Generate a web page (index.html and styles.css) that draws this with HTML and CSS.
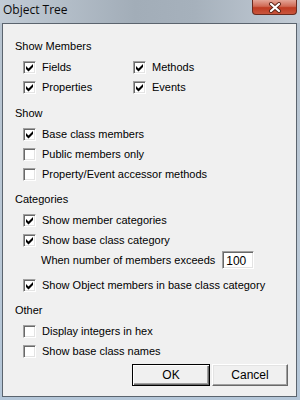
FILE: index.html
```html
<!DOCTYPE html>
<html lang="en">
<head>
  <meta charset="UTF-8" />
  <title>Object Tree</title>
  <link rel="stylesheet" href="styles.css">
</head>
<body>
  <div class="window">
    <div class="titlebar">
      <span class="title">Object Tree</span>
      <span class="close">
        <svg width="14" height="11" viewBox="0 0 14 11">
          <path d="M3 2 L11 9 M11 2 L3 9" stroke="#5a2418" stroke-width="4" stroke-linecap="round" />
          <path d="M3 2 L11 9 M11 2 L3 9" stroke="#fff" stroke-width="2.2" stroke-linecap="round" />
        </svg>
      </span>
    </div>
    <div class="client">
      <div class="group">
        <div class="group-label">Show Members</div>
        <div class="members">
          <div class="check"><span class="box"><svg viewBox="0 0 11 11"><path d="M2 4 L4.5 6.5 L9 2 L9 5 L4.5 9.5 L2 7 Z" /></svg></span>Fields</div>
          <div class="check"><span class="box"><svg viewBox="0 0 11 11"><path d="M2 4 L4.5 6.5 L9 2 L9 5 L4.5 9.5 L2 7 Z" /></svg></span>Methods</div>
          <div class="check"><span class="box"><svg viewBox="0 0 11 11"><path d="M2 4 L4.5 6.5 L9 2 L9 5 L4.5 9.5 L2 7 Z" /></svg></span>Properties</div>
          <div class="check"><span class="box"><svg viewBox="0 0 11 11"><path d="M2 4 L4.5 6.5 L9 2 L9 5 L4.5 9.5 L2 7 Z" /></svg></span>Events</div>
        </div>
      </div>

      <div class="group">
        <div class="group-label">Show</div>
        <div class="check"><span class="box"><svg viewBox="0 0 11 11"><path d="M2 4 L4.5 6.5 L9 2 L9 5 L4.5 9.5 L2 7 Z" /></svg></span>Base class members</div>
        <div class="check"><span class="box"></span>Public members only</div>
        <div class="check"><span class="box"></span>Property/Event accessor methods</div>
      </div>

      <div class="group">
        <div class="group-label">Categories</div>
        <div class="check"><span class="box"><svg viewBox="0 0 11 11"><path d="M2 4 L4.5 6.5 L9 2 L9 5 L4.5 9.5 L2 7 Z" /></svg></span>Show member categories</div>
        <div class="check"><span class="box"><svg viewBox="0 0 11 11"><path d="M2 4 L4.5 6.5 L9 2 L9 5 L4.5 9.5 L2 7 Z" /></svg></span>Show base class category</div>
        <div class="exceeds">
          <span>When number of members exceeds</span>
          <span class="field">100</span>
        </div>
        <div class="check spaced"><span class="box"><svg viewBox="0 0 11 11"><path d="M2 4 L4.5 6.5 L9 2 L9 5 L4.5 9.5 L2 7 Z" /></svg></span>Show Object members in base class category</div>
      </div>

      <div class="group">
        <div class="group-label">Other</div>
        <div class="check"><span class="box"></span>Display integers in hex</div>
        <div class="check"><span class="box"></span>Show base class names</div>
      </div>

      <div class="buttons">
        <button class="btn default">OK</button>
        <button class="btn">Cancel</button>
      </div>
    </div>
  </div>
</body>
</html>
```

FILE: styles.css
```css
body {
  margin: 0;
  width: 300px;
  height: 400px;
  overflow: hidden;
  font-family: "Liberation Sans", Arial, sans-serif;
  font-size: 11px;
  color: #000;
}
.window {
  width: 300px;
  height: 400px;
  display: flex;
  flex-direction: column;
  background: linear-gradient(to bottom, #b7c3cf, #bac8d6 60%, #b4c6d8);
}
.titlebar {
  height: 23px;
  display: flex;
  justify-content: space-between;
  align-items: flex-start;
  padding: 0 3px 0 3px;
  background: linear-gradient(to right, #c2ccd6, #a2adb8 45%, #a6b1bc 65%, #c3ccd6);
}
.title {
  font-family: "Open Sans", "Noto Sans", sans-serif;
  font-size: 12px;
  line-height: 20px;
  color: #0a0a0a;
}
.close {
  width: 45px;
  height: 15px;
  box-sizing: border-box;
  display: flex;
  justify-content: center;
  align-items: center;
  border: 1px solid #6a2a1e;
  border-top: none;
  border-radius: 0 0 4px 4px;
  background: linear-gradient(to bottom, #e4a597, #d06a55 45%, #bf3b22 55%, #c9553c);
}
.close svg {
  display: block;
}
.client {
  flex: 1;
  margin: 0 3px 3px 2px;
  border: 1px solid #5b646e;
  background: #f0f0f0;
  padding: 12px 0 0 12px;
}
.group {
  margin-top: 5px;
}
.group:first-child {
  margin-top: 0;
}
.group:nth-child(2) {
  margin-top: 6px;
}
.group-label {
  height: 20px;
  line-height: 20px;
  margin-bottom: 1px;
}
.members {
  display: grid;
  grid-template-columns: 110px auto;
}
.check {
  height: 20px;
  display: flex;
  align-items: center;
  gap: 5px;
  padding-left: 8px;
}
.check.spaced {
  margin-top: 5px;
}
.box {
  width: 13px;
  height: 13px;
  box-sizing: border-box;
  flex: none;
  margin-right: 1px;
  background: #fff;
  border: 1px solid;
  border-color: #a0a0a0 #fff #fff #a0a0a0;
  box-shadow: inset 1px 1px 0 #696969, inset -1px -1px 0 #e3e3e3;
}
.box svg {
  display: block;
  width: 11px;
  height: 11px;
  fill: #000;
}
.exceeds {
  height: 20px;
  display: flex;
  align-items: center;
  padding-left: 26px;
  gap: 7px;
}
.field {
  width: 32px;
  height: 18px;
  box-sizing: border-box;
  background: #fff;
  border: 1px solid;
  border-color: #a0a0a0 #fff #fff #a0a0a0;
  box-shadow: inset 1px 1px 0 #696969, inset -1px -1px 0 #e3e3e3;
  padding: 3px 0 0 3px;
  font-size: 12px;
  line-height: 13px;
}
.buttons {
  display: flex;
  justify-content: flex-end;
  gap: 2px;
  margin-top: 3px;
  padding-right: 8px;
}
.btn {
  width: 76px;
  height: 22px;
  box-sizing: border-box;
  padding: 0;
  font-family: "Liberation Sans", Arial, sans-serif;
  font-size: 12px;
  color: #000;
  background: #f0f0f0;
  border: 1px solid;
  border-color: #fff #696969 #696969 #fff;
  box-shadow: inset -1px -1px 0 #a0a0a0, inset 1px 1px 0 #e3e3e3;
}
.btn.default {
  width: 78px;
  border-color: #000;
  box-shadow: inset 1px 1px 0 #fff, inset -1px -1px 0 #696969, inset -2px -2px 0 #a0a0a0;
}
```
